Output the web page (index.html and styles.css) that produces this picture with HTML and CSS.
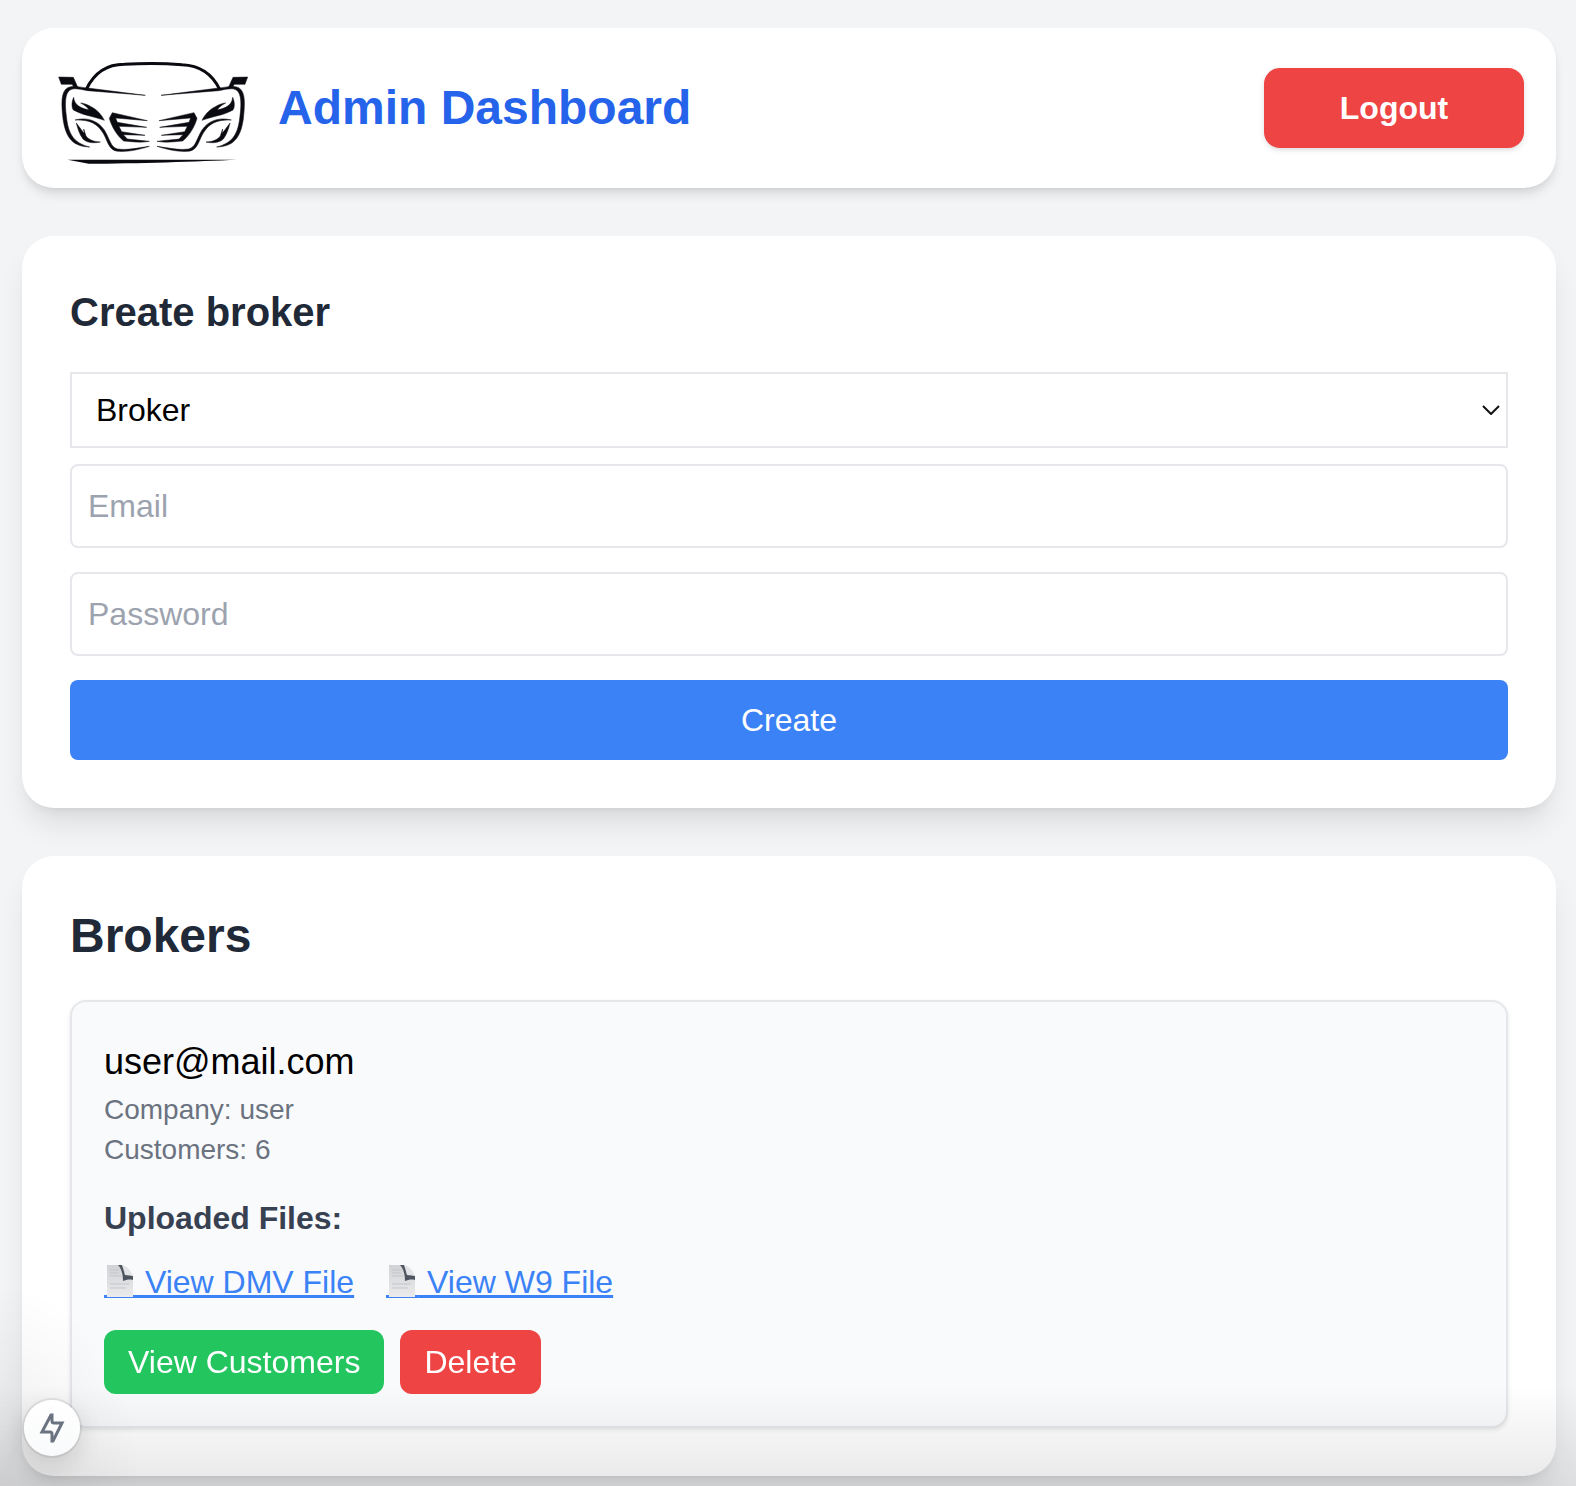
FILE: index.html
```html
<!DOCTYPE html>
<html lang="en">
  <head>
    <meta charset="UTF-8" />
    <meta name="viewport" content="width=device-width, initial-scale=1.0" />
    <title>Admin Dashboard</title>
    <link rel="stylesheet" href="styles.css" />
  </head>
  <body>
    <header class="topbar">
      <div class="brand">
        <svg class="logo" viewBox="161 124 600 336" role="img" aria-label="Car logo">
          <!-- roof -->
          <path d="M258 236C282 186 320 161 372 161C420 158 495 158 545 162C595 164 633 184 658 236" fill="none" stroke="#0a0b10" stroke-width="9" />
          <!-- left half of the front, reused mirrored -->
          <g id="half" fill="#0a0b10" stroke="#0a0b10" stroke-width="1.5">
            <path d="M175 199L219 200L232 229L222 231L215 221L183 221Z" />
            <path d="M435 254L262 240C235 235 220 231 208 239C193 249 194 285 198 315C203 365 216 396 268 409C209 408 195 370 188 325C183 280 181 243 202 231C220 223 240 230 262 232Z" />
            <path d="M220 260C213 276 214 290 219 298C245 314 285 318 312 329C304 313 292 298 272 288C262 282 252 278 241 277C252 283 262 290 266 298C246 294 222 286 220 260Z" />
            <path d="M224 328C262 318 294 331 312 358C330 388 331 410 352 415C382 419 410 412 447 407C415 417 385 424 352 422C322 418 322 385 304 361C290 340 268 326 224 328Z" />
            <path d="M228 337C240 353 246 362 252 368L250 355L257 376C266 388 280 393 300 394C278 399 257 395 248 385C238 372 232 354 228 337Z" />
            <path d="M336 306L441 330L346 322L351 335L439 350L356 347L364 363L434 374L369 372L381 385L447 392C425 397 390 393 370 391C350 376 333 346 327 323Z" />
          </g>
          <use href="#half" transform="translate(917 0) scale(-1 1)" />
          <path d="M202 447L710 447C600 452 400 459 265 459Z" fill="#0a0b10" />
        </svg>
        <h1 class="title">Admin Dashboard</h1>
      </div>
      <button class="btn logout" type="button">Logout</button>
    </header>

    <main class="content">
      <section class="card">
        <h2 class="form-title">Create broker</h2>
        <form class="form">
          <div class="select-wrap">
            <select class="select" aria-label="Role">
              <option>Broker</option>
            </select>
            <svg class="chevron" viewBox="0 0 18 10" aria-hidden="true">
              <path d="M1 1L9 9L17 1" fill="none" stroke="#111" stroke-width="2" />
            </svg>
          </div>
          <input class="input" type="email" placeholder="Email" aria-label="Email" />
          <input class="input" type="password" placeholder="Password" aria-label="Password" />
          <button class="btn create" type="button">Create</button>
        </form>
      </section>

      <section class="card">
        <h2 class="list-title">Brokers</h2>
        <article class="broker">
          <p class="broker-email">user@mail.com</p>
          <p class="broker-info">Company: user</p>
          <p class="broker-info">Customers: 6</p>
          <h3 class="files-title">Uploaded Files:</h3>
          <div class="files">
            <a class="file-link" href="#"><svg class="doc" viewBox="0 0 32 33" aria-hidden="true">
              <defs>
                <linearGradient id="paper" x1="0" y1="0" x2="0" y2="1">
                  <stop offset="0" stop-color="#d0d2d5" />
                  <stop offset="1" stop-color="#ebebed" />
                </linearGradient>
              </defs>
              <path d="M0 30H32V33H0Z" fill="#3b82f6" />
              <g id="page">
                <path d="M3 0H18Q27 3 29 13V32H3Z" fill="url(#paper)" />
                <path d="M6 5H15M6 8H15M6 11H17M6 19H25M6 23H22" stroke="#c3c5c9" />
                <path d="M14 0H18L21 10L29 11V15C25 14 22 15 19 16C19 11 18 4 14 0Z" fill="#4f5560" />
                <path d="M18 0Q26 3 29 11Q25 9 21 10Q21 4 18 0Z" fill="#e3e5e8" />
              </g>
            </svg> View DMV File</a>
            <a class="file-link" href="#"><svg class="doc" viewBox="0 0 32 33" aria-hidden="true">
              <path d="M0 30H32V33H0Z" fill="#3b82f6" />
              <use href="#page" />
            </svg> View W9 File</a>
          </div>
          <div class="actions">
            <button class="btn small green" type="button">View Customers</button>
            <button class="btn small red" type="button">Delete</button>
          </div>
        </article>
      </section>
    </main>

    <div class="shade"></div>
    <button class="indicator" type="button" aria-label="Status">
      <svg class="bolt" viewBox="0 0 26 34" aria-hidden="true">
        <path d="M12 4L3 21H11Q13 21 13 23V30H14L23 12H15Q13 12 13 10V4Z" fill="none" stroke="#6b7280" stroke-width="3" />
      </svg>
    </button>
  </body>
</html>
```
FILE: styles.css
```css
* {
  box-sizing: border-box;
  margin: 0;
  padding: 0;
}
body {
  padding: 28px 20px 10px 22px;
  background: #f3f4f6;
  color: #000;
  font-family: "Liberation Sans", Arial, sans-serif;
  font-size: 32px;
  line-height: 48px;
}
button,
input,
select {
  font: inherit;
}
.topbar {
  display: flex;
  align-items: center;
  justify-content: space-between;
  margin-bottom: 48px;
  padding: 24px 32px;
  border-radius: 32px;
  background: #fff;
  box-shadow: 0 8px 12px -2px rgba(0, 0, 0, 0.1),
    0 4px 8px -4px rgba(0, 0, 0, 0.1);
}
.brand {
  display: flex;
  align-items: center;
  gap: 24px;
}
.logo {
  width: 200px;
  height: 112px;
}
.title {
  color: #2563eb;
  font-size: 48px;
  line-height: 64px;
}
.btn {
  border: none;
  color: #fff;
  cursor: pointer;
}
.logout {
  width: 260px;
  padding: 16px;
  border-radius: 16px;
  background: #ef4444;
  font-weight: bold;
  box-shadow: 0 2px 6px rgba(0, 0, 0, 0.1), 0 2px 4px -2px rgba(0, 0, 0, 0.1);
}
.content {
  display: flex;
  flex-direction: column;
  gap: 48px;
}
.card {
  padding: 48px;
  border-radius: 32px;
  background: #fff;
  box-shadow: 0 20px 30px -6px rgba(0, 0, 0, 0.1),
    0 8px 12px -8px rgba(0, 0, 0, 0.1);
}
.form-title {
  margin-bottom: 32px;
  color: #1f2937;
  font-size: 40px;
  line-height: 56px;
}
.form {
  display: flex;
  flex-direction: column;
  gap: 24px;
}
.select-wrap {
  position: relative;
  margin-bottom: -8px;
}
.select {
  display: block;
  width: 100%;
  padding: 12px 24px;
  border: 2px solid #e5e7eb;
  background: #fff;
  color: #000;
  appearance: none;
}
.chevron {
  position: absolute;
  top: 33px;
  right: 8px;
  width: 18px;
  height: 10px;
  pointer-events: none;
}
.input {
  width: 100%;
  padding: 16px;
  border: 2px solid #e5e7eb;
  border-radius: 8px;
  background: #fff;
}
.input::placeholder {
  color: #9ca3af;
}
.create {
  padding: 16px;
  border-radius: 8px;
  background: #3b82f6;
}
.list-title {
  margin-bottom: 32px;
  color: #1f2937;
  font-size: 48px;
  line-height: 64px;
}
.broker {
  padding: 32px;
  border: 2px solid #e5e7eb;
  border-radius: 16px;
  background: #f9fafb;
  box-shadow: 0 2px 4px rgba(0, 0, 0, 0.1);
}
.broker-email {
  font-size: 36px;
  line-height: 56px;
}
.broker-info {
  color: #6b7280;
  font-size: 28px;
  line-height: 40px;
}
.files-title {
  margin-top: 24px;
  color: #374151;
  font-size: 32px;
}
.files {
  display: flex;
  flex-wrap: wrap;
  gap: 32px;
  margin-top: 16px;
}
.file-link {
  color: #3b82f6;
  text-decoration: underline;
  text-decoration-thickness: 3px;
  text-underline-offset: 2px;
  text-decoration-skip-ink: none;
}
.doc {
  width: 32px;
  height: 33px;
  vertical-align: -5px;
}
.actions {
  position: relative;
  z-index: 2;
  display: flex;
  gap: 16px;
  margin-top: 24px;
}
.small {
  padding: 8px 24px;
  border-radius: 12px;
}
.green {
  background: #22c55e;
}
.red {
  background: #ef4444;
}
/* dark fade along the bottom of the window */
.shade {
  position: fixed;
  right: 0;
  bottom: 0;
  left: 0;
  height: 200px;
  background: linear-gradient(to top, rgba(0, 0, 0, 0.09), transparent 50%),
    radial-gradient(
      ellipse 140px 200px at 0 100%,
      rgba(0, 0, 0, 0.08),
      transparent
    );
  pointer-events: none;
}
.indicator {
  position: fixed;
  bottom: 30px;
  left: 24px;
  display: flex;
  align-items: center;
  justify-content: center;
  width: 56px;
  height: 56px;
  border: none;
  border-radius: 50%;
  background: linear-gradient(#fff, #f9fafb);
  box-shadow: 0 0 0 2px rgba(0, 0, 0, 0.08), 0 8px 24px rgba(0, 0, 0, 0.12);
}
.bolt {
  width: 26px;
  height: 34px;
}
```
